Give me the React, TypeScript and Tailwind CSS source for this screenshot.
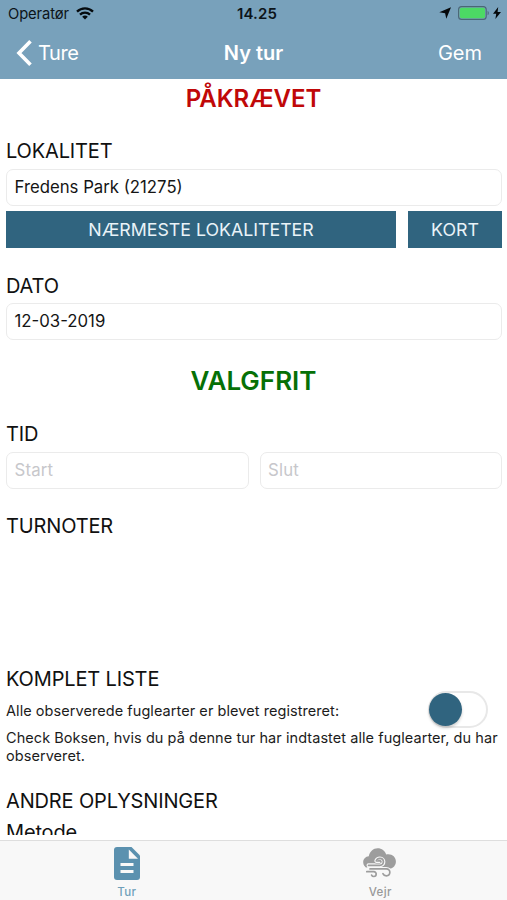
import React, { useState } from 'react';

const Label: React.FC<{ className?: string; children: React.ReactNode }> = ({ className = '', children }) => (
  <h2 className={`flex h-9 items-center whitespace-nowrap text-[20px] tracking-[-0.15px] text-[#111] ${className}`}>{children}</h2>
);

const Field: React.FC<{ value?: string; placeholder?: string; className?: string }> = ({ value, placeholder, className = '' }) => (
  <div className={`flex h-[37px] items-center rounded-[7px] border border-[#ebebeb] bg-white px-[7.5px] pt-px text-[16.75px] ${className}`}>
    {value ? <span className="text-[#151515]">{value}</span> : <span className="tracking-[0.2px] text-[#c7c7cb]">{placeholder}</span>}
  </div>
);

const StatusBar = () => (
  <div className="grid h-[27px] grid-cols-3 items-center px-[8px] pt-px text-[15px] text-[#0c1419]">
    <div className="flex items-center gap-[7px]">
      <span className="text-[14.75px] tracking-[-0.1px]">Operatør</span>
      <svg width="18" height="13" viewBox="0 0 18 13" fill="none" stroke="#050a0d" strokeWidth="2.3" className="-mt-[2px]">
        <path d="M1 4.6C5.5.2 12.5.2 17 4.6" />
        <path d="M4 7.7c2.8-2.7 7.2-2.7 10 0" />
        <path d="M6.2 9.7c1.6-1.5 4-1.5 5.6 0L9 12.6z" fill="#050a0d" stroke="none" />
      </svg>
    </div>
    <span className="pl-[7px] text-center font-semibold tracking-[0.1px]">14.25</span>
    <div className="-mt-[2px] flex items-center justify-end">
      <svg width="12" height="12" viewBox="0 0 12 12" className="mr-[7px]">
        <path d="M12 .3 7.3 11.7 6.1 6.3 .3 5.3z" fill="#05080a" />
      </svg>
      <svg width="32" height="14" viewBox="0 0 32 14">
        <rect x=".6" y=".6" width="27.6" height="12.8" rx="3" fill="none" stroke="#4a6674" strokeWidth="1.1" />
        <rect x="1.8" y="1.8" width="25.2" height="10.4" rx="1.8" fill="#4cd964" />
        <path d="M29.6 4.7c1.6.8 1.6 3.8 0 4.6z" fill="#4a6674" />
      </svg>
      <svg width="8" height="12" viewBox="0 0 8 12" className="-mr-[2px] ml-[3px]">
        <path d="M5.2 0 0 6.8h3.2L2.4 12 8 5H4.6z" fill="#05080a" />
      </svg>
    </div>
  </div>
);

const NavBar = () => (
  <div className="grid h-[52px] grid-cols-3 items-center text-[20px] text-white">
    <button className="flex items-center gap-[6px] pl-[16px]">
      <svg width="16" height="26" viewBox="0 0 16 26" fill="none" stroke="white" strokeWidth="3.6">
        <path d="M14.5 1.3 3 13l11.5 11.7" />
      </svg>
      <span className="tracking-[-0.4px]">Ture</span>
    </button>
    <span className="text-center font-semibold">Ny tur</span>
    <button className="pr-[25px] text-right">Gem</button>
  </div>
);

const DocumentIcon = () => (
  <svg width="26" height="33" viewBox="0 0 26 33">
    <path d="M3 0h14.5L26 8.5V30a3 3 0 0 1-3 3H3a3 3 0 0 1-3-3V3a3 3 0 0 1 3-3z" fill="#5b91af" />
    <path d="M14.8 2.5v9.2H24z" fill="#f8f8f8" />
    <path d="M6.5 17.6h13M6.5 24.4h13" stroke="#f8f8f8" strokeWidth="3" />
  </svg>
);

const WeatherIcon = () => (
  <svg width="34" height="31" viewBox="0 0 34 31" fill="none" strokeLinecap="round">
    <path d="M6 20.5C2.5 20 .2 17.2.2 14.2c0-3.2 2.3-5.7 5.6-6C6.7 3.6 10.3.3 14.6.3c4.1 0 7.500 2.600 8.600 6.200 5.400-1.200 9.700 2.300 9.700 7 0 3.800-2.600 6.800-6.300 7.300z" fill="#9d9d9d" />
    <g stroke="#f8f8f8" strokeWidth="4">
      <path d="M5.500 17.300h11.300c4.900 0 4.700-6.900.1-6.900-1.800 0-3 .9-3.600 2.400" />
      <path d="M5 20.900h18.300c4.900 0 4.500 6.900.1 6.900-1.700 0-2.900-.8-3.500-2.100" />
    </g>
    <path d="M12.500 14.300c.9-1.600 2.300-2.500 4.300-2.500 2.400 0 2.400 3.600.1 3.600h-4.400z" fill="#9d9d9d" />
    <g stroke="#9d9d9d" strokeWidth="1.7">
      <path d="M5.500 17.300h11.300c4.900 0 4.700-6.900.1-6.900-1.800 0-3 .9-3.600 2.400" />
      <path d="M7 20.900h16.300c4.900 0 4.500 6.900.1 6.900-1.700 0-2.900-.8-3.500-2.100" />
      <path d="M3.800 23.700h7c3.300 0 3 4.800.1 4.800-1.200 0-1.900-.5-2.300-1.400" />
    </g>
    <path d="M13 14.400h3.800" stroke="#f8f8f8" strokeWidth="1.100" />
  </svg>
);

const TabBar = () => (
  <nav className="grid h-[60px] shrink-0 grid-cols-2 border-t border-[#dedede] bg-[#f8f8f8] text-[11.5px] font-medium">
    <button className="flex flex-col items-center pt-[6px] text-[#6f9fba]">
      <DocumentIcon />
      <span className="mt-[5px] leading-[14px] tracking-[0.4px]">Tur</span>
    </button>
    <button className="flex flex-col items-center pt-[7px] text-[#999]">
      <WeatherIcon />
      <span className="mt-[6px] leading-[14px] tracking-[0.4px]">Vejr</span>
    </button>
  </nav>
);

export default function App() {
  const [complete, setComplete] = useState(false);

  return (
    <div className="flex h-[900px] w-[507px] flex-col overflow-hidden bg-white font-['Inter',sans-serif]">
      <header className="h-[79px] shrink-0 bg-[#78a1bb]">
        <StatusBar />
        <NavBar />
      </header>

      <main className="h-[756px] shrink-0 overflow-hidden pr-[5px] pl-[6px]">
        <h1 className="flex h-10 items-center justify-center pr-px text-[24px] font-semibold text-[#c00808]">PÅKRÆVET</h1>

        <Label className="mt-[14px]">LOKALITET</Label>
        <Field value="Fredens Park (21275)" />
        <div className="mt-[5px] flex h-[37px] gap-3 text-[17.75px] text-[#e9f3f8]">
          <button className="flex-1 bg-[#30647f] pt-px">NÆRMESTE LOKALITETER</button>
          <button className="w-[94px] bg-[#30647f] pt-px">KORT</button>
        </div>

        <Label className="mt-[19px] pt-px">DATO</Label>
        <Field value="12-03-2019" />

        <h1 className="mt-[20px] flex h-10 items-center justify-center pr-px text-[26px] font-semibold text-[#067006]">VALGFRIT</h1>

        <Label className="mt-[16px]">TID</Label>
        <div className="flex gap-[11px]">
          <Field placeholder="Start" className="flex-1" />
          <Field placeholder="Slut" className="flex-1" />
        </div>

        <Label className="mt-[19px]">TURNOTER</Label>
        <div className="h-[117px]" />

        <Label>KOMPLET LISTE</Label>
        <div className="-mt-[6px] flex h-[37px] items-center justify-between pr-[14px]">
          <span className="pt-[2px] text-[14.5px] tracking-[0.06px] text-[#1c1c1c]">Alle observerede fuglearter er blevet registreret:</span>
          <button
            onClick={() => setComplete(!complete)}
            className="flex h-[37px] w-[60px] items-center rounded-full border-2 border-[#e8e8e8] bg-white"
          >
            <span
              className={`size-[33px] rounded-full bg-[#30647f] shadow-[0_2px_3px_rgba(0,0,0,0.2)] transition-transform ${complete ? 'translate-x-[24px]' : '-translate-x-px'}`}
            />
          </button>
        </div>
        <p className="mt-[1px] whitespace-nowrap text-[14.5px] leading-[17.5px] tracking-[0.06px] text-[#1c1c1c]">
          Check Boksen, hvis du på denne tur har indtastet alle fuglearter, du har
          <br />
          observeret.
        </p>

        <Label className="mt-[19px]">ANDRE OPLYSNINGER</Label>
        <Label className="-mt-[5px]">Metode</Label>
      </main>

      <div className="h-[5px] shrink-0 bg-white" />
      <TabBar />
    </div>
  );
}
